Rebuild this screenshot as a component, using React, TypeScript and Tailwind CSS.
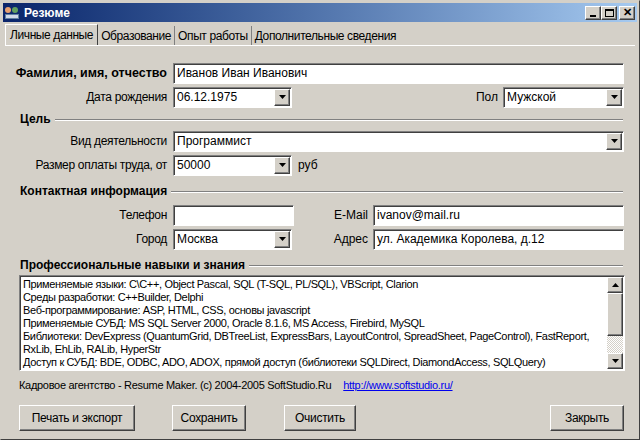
const F = { fontFamily: '"Liberation Sans", Arial, sans-serif' }

function Sunken({ w, children, className = "" }: { w: string; children?: React.ReactNode; className?: string }) {
  return (
    <div className={`${w} h-[21px] bg-white border border-t-[#808080] border-l-[#808080] border-b-white border-r-white shadow-[inset_1px_1px_0_#404040] flex items-center px-[3px] text-[12px] text-black ${className}`}>
      {children}
    </div>
  )
}

function Btn3d({ className = "", children }: { className?: string; children?: React.ReactNode }) {
  return (
    <div className={`bg-[#d4d0c8] border border-t-white border-l-white border-b-[#404040] border-r-[#404040] shadow-[inset_-1px_-1px_0_#808080] flex items-center justify-center ${className}`}>
      {children}
    </div>
  )
}

function Arrow({ up = false }: { up?: boolean }) {
  return (
    <svg width="7" height="4" viewBox="0 0 7 4">
      <path d={up ? "M3.5 0 L7 4 L0 4 Z" : "M0 0 L7 0 L3.5 4 Z"} fill="#000" />
    </svg>
  )
}

function Combo({ w, value }: { w: string; value: string }) {
  return (
    <Sunken w={w} className="pr-0 justify-between">
      <span>{value}</span>
      <Btn3d className="w-[16px] h-[17px] mr-[1px]"><Arrow /></Btn3d>
    </Sunken>
  )
}

function Section({ title }: { title: string }) {
  return (
    <div className="flex items-center gap-1 h-[16px] pl-[15px] pr-[12px]">
      <span className="text-[12px] font-bold">{title}</span>
      <div className="flex-1 h-[2px] border-t border-t-[#808080] border-b border-b-white mt-[2px]" />
    </div>
  )
}

function Label({ children, w = "w-[167px]" }: { children: React.ReactNode; w?: string }) {
  return <div className={`${w} text-right pr-[6px] text-[12px] tracking-[-0.3px]`}>{children}</div>
}

export default function App() {
  const skills = [
    "Применяемые языки: C\\C++, Object Pascal, SQL (T-SQL, PL/SQL), VBScript, Clarion",
    "Среды разработки: C++Builder, Delphi",
    "Веб-программирование: ASP, HTML, CSS, основы javascript",
    "Применяемые СУБД: MS SQL Server 2000, Oracle 8.1.6, MS Access, Firebird, MySQL",
    "Библиотеки: DevExpress (QuantumGrid, DBTreeList, ExpressBars, LayoutControl, SpreadSheet, PageControl), FastReport,",
    "RxLib, EhLib, RALib, HyperStr",
    "Доступ к СУБД: BDE, ODBC, ADO, ADOX, прямой доступ (библиотеки SQLDirect, DiamondAccess, SQLQuery)",
  ]
  return (
    <div style={F} className="w-[640px] h-[440px] bg-[#d4d0c8] text-black border border-t-[#d4d0c8] border-l-[#d4d0c8] border-b-[#404040] border-r-[#404040] flex flex-col overflow-hidden">
      {/* title */}
      <div className="h-[19px] mx-[2px] mt-[2px] bg-gradient-to-r from-[#0a246a] to-[#a6caf0] flex items-center px-[2px]">
        <div className="w-[16px] h-[14px] mr-[3px] flex flex-col justify-center gap-[1px]">
          <div className="flex gap-[1px]"><div className="w-[6px] h-[6px] rounded-full bg-[#e8a070]" /><div className="w-[6px] h-[6px] rounded-full bg-[#60a060]" /></div>
          <div className="w-[14px] h-[5px] bg-[#d0d8e8] border border-[#6080a0]" />
        </div>
        <span className="text-white font-bold text-[12px] flex-1">Резюме</span>
        <div className="flex gap-0">
          <Btn3d className="w-[16px] h-[14px] items-end pb-[2px]"><div className="w-[6px] h-[2px] bg-black" /></Btn3d>
          <Btn3d className="w-[16px] h-[14px]"><div className="w-[9px] h-[8px] border border-black border-t-2" /></Btn3d>
          <Btn3d className="w-[16px] h-[14px] ml-[2px] text-[11px] font-bold leading-none">✕</Btn3d>
        </div>
      </div>
      {/* tabs */}
      <div className="flex items-end h-[22px] pl-[4px] mt-[1px] text-[12px] tracking-[-0.4px]">
        <div className="h-[21px] px-[4px] flex items-center bg-[#d4d0c8] border-t border-l border-t-white border-l-white border-r border-r-[#404040]">Личные данные</div>
        <div className="h-[19px] px-[3px] flex items-center border-r border-r-[#808080]">Образование</div>
        <div className="h-[19px] px-[3px] flex items-center border-r border-r-[#808080]">Опыт работы</div>
        <div className="h-[19px] px-[3px] flex items-center">Дополнительные сведения</div>
      </div>
      <div className="flex-1 mx-[4px] border-t border-t-white flex flex-col pt-[15px]">
        <div className="flex items-center h-[24px] ml-[1px]">
          <Label><span className="font-bold text-[12.5px] tracking-[0px]">Фамилия, имя, отчество</span></Label>
          <Sunken w="w-[451px]">Иванов Иван Иванович</Sunken>
        </div>
        <div className="flex items-center h-[24px] ml-[1px]">
          <Label>Дата рождения</Label>
          <Combo w="w-[119px]" value="06.12.1975" />
          <div className="w-[211px] text-right pr-[5px] text-[12px]">Пол</div>
          <Combo w="w-[121px]" value="Мужской" />
        </div>
        <div className="mt-[2px]"><Section title="Цель" /></div>
        <div className="flex items-center h-[24px] ml-[1px] mt-[2px]">
          <Label>Вид деятельности</Label>
          <Combo w="w-[451px]" value="Программист" />
        </div>
        <div className="flex items-center h-[24px] ml-[1px]">
          <Label>Размер оплаты труда, от</Label>
          <Combo w="w-[119px]" value="50000" />
          <span className="ml-[6px] text-[12px]">руб</span>
        </div>
        <div className="mt-[6px]"><Section title="Контактная информация" /></div>
        <div className="flex items-center h-[24px] ml-[1px] mt-[4px]">
          <Label>Телефон</Label>
          <Sunken w="w-[121px]" />
          <div className="w-[79px] text-right pr-[5px] text-[12px]">E-Mail</div>
          <Sunken w="w-[251px]">ivanov@mail.ru</Sunken>
        </div>
        <div className="flex items-center h-[24px] ml-[1px]">
          <Label>Город</Label>
          <Combo w="w-[119px]" value="Москва" />
          <div className="w-[81px] text-right pr-[5px] text-[12px]">Адрес</div>
          <Sunken w="w-[251px]">ул. Академика Королева, д.12</Sunken>
        </div>
        <div className="mt-[6px]"><Section title="Профессиональные навыки и знания" /></div>
        <div className="ml-[14px] mt-[2px] w-[606px] h-[96px] bg-white border border-t-[#808080] border-l-[#808080] border-b-white border-r-white shadow-[inset_1px_1px_0_#404040] flex">
          <div className="flex-1 pl-[3px] pt-[2px] text-[11px] tracking-[-0.35px] leading-[13px] whitespace-nowrap overflow-hidden">
            {skills.map((s) => <div key={s}>{s}</div>)}
          </div>
          <div className="w-[16px] flex flex-col bg-[#e8e6e1] my-[1px] mr-[1px]">
            <Btn3d className="h-[16px]"><Arrow up /></Btn3d>
            <Btn3d className="h-[43px]" />
            <div className="flex-1 bg-[repeating-conic-gradient(#d4d0c8_0_25%,#ffffff_0_50%)] bg-[length:2px_2px]" />
            <Btn3d className="h-[16px]"><Arrow /></Btn3d>
          </div>
        </div>
        <div className="ml-[14px] mt-[6px] text-[11px] tracking-[-0.3px] flex gap-[12px]">
          <span>Кадровое агентство - Resume Maker. (c) 2004-2005 SoftStudio.Ru</span>
          <span className="text-[#0000ee] underline">http://www.softstudio.ru/</span>
        </div>
        <div className="flex items-center ml-[14px] mt-[11px] text-[12px] tracking-[-0.3px]">
          <Btn3d className="w-[116px] h-[26px]">Печать и экспорт</Btn3d>
          <Btn3d className="w-[74px] h-[26px] ml-[37px]">Сохранить</Btn3d>
          <Btn3d className="w-[72px] h-[26px] ml-[38px]">Очистить</Btn3d>
          <Btn3d className="w-[74px] h-[26px] ml-[194px]">Закрыть</Btn3d>
        </div>
      </div>
    </div>
  )
}
